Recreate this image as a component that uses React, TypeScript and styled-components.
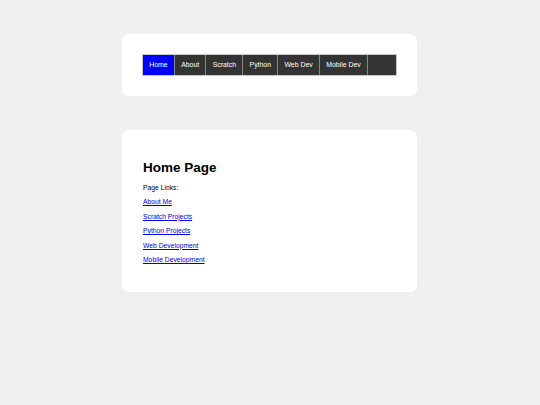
import styled, { createGlobalStyle } from "styled-components";

const navItems = ["Home", "About", "Scratch", "Python", "Web Dev", "Mobile Dev"];

const pageLinks = [
  "About Me",
  "Scratch Projects",
  "Python Projects",
  "Web Development",
  "Mobile Development",
];

export default function App() {
  return (
    <>
      <GlobalStyle />
      <Page>
        <Card>
          <NavBar>
            {navItems.map((item, i) => (
              <NavItem key={item} href="#" $active={i === 0}>
                {item}
              </NavItem>
            ))}
          </NavBar>
        </Card>
        <Card>
          <Heading>Home Page</Heading>
          <Text>Page Links:</Text>
          {pageLinks.map((link) => (
            <Text key={link}>
              <Link href="#">{link}</Link>
            </Text>
          ))}
        </Card>
      </Page>
    </>
  );
}

const GlobalStyle = createGlobalStyle`
  html, body {
    margin: 0;
    padding: 0;
    background: #f0f0f2;
    font-family: "Liberation Sans", Arial, sans-serif;
    font-size: 6.75px;
    color: #000;
  }
`;

const Page = styled.div`
  display: flex;
  flex-direction: column;
  align-items: center;
  gap: 34px;
  padding-top: 34px;
  padding-right: 1px;
`;

const Card = styled.div`
  width: 295px;
  box-sizing: border-box;
  padding: 21px;
  background: #fff;
  border-radius: 7px;
  display: flow-root;
`;

const NavBar = styled.nav`
  display: flex;
  height: 19.5px;
  background: #333;
  outline: 0.5px solid #c8c8c8;
`;

const NavItem = styled.a<{ $active?: boolean }>`
  display: flex;
  align-items: center;
  padding: 0 6.25px;
  color: #fff;
  text-decoration: none;
  font-size: 6.9px;
  background: ${({ $active }) => ($active ? "#0000ff" : "transparent")};
  border-right: 0.7px solid #888;
`;

const Heading = styled.h1`
  font-size: 13.5px;
  font-weight: bold;
  margin: 9px 0;
`;

const Text = styled.p`
  margin: 6.75px 0;
  line-height: 1.16;
`;

const Link = styled.a`
  color: #0000ee;
  text-decoration: underline;
`;
